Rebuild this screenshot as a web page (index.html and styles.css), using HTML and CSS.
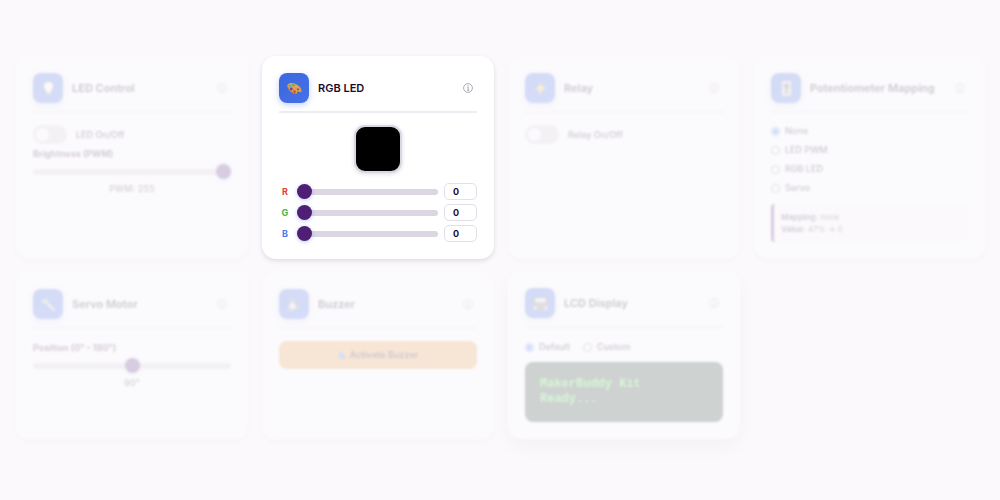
FILE: index.html
```html
<!DOCTYPE html>
<html lang="en">
<head>
    <meta charset="UTF-8">
    <title>MakerBuddy Kit</title>
    <link rel="stylesheet" href="styles.css">
</head>
<body>
<svg class="defs" aria-hidden="true">
    <symbol id="info" viewBox="0 0 10 10">
        <circle cx="5" cy="5" r="4.4" fill="none" stroke="currentColor" stroke-width=".7"/>
        <path d="M4.2 4.3H5.2V7.2M4 7.3H6.3" fill="none" stroke="currentColor" stroke-width=".7"/>
        <circle cx="5" cy="2.800" r=".6" fill="currentColor"/>
    </symbol>
    <symbol id="bell" viewBox="0 0 16 16">
        <path d="M3 2L6 1L9 4L8 7L4 6Z" fill="#85868b"/>
        <path d="M4 6L9 7L14 11L9 12L4 15L1 13Z" fill="#e9e6d6"/>
        <path d="M8 7L11 7L15 12L9 11Z" fill="#77787d"/>
        <path d="M1 12L5 11L6 14L3 15Z" fill="#9a958a"/>
    </symbol>
</svg>
<main class="grid">
    <section class="card dim">
        <header class="head">
            <span class="icon"><svg viewBox="0 0 16 16">
                <path d="M8 1C4 1 2.500 4 3.500 7C4 9 5.500 9.500 5.500 12H10.500C10.500 9.500 12 9 12.500 7C13.500 4 12 1 8 1Z" fill="#fff8dc"/>
                <path d="M6 12H10V14L8 15.500L6 14Z" fill="#a6a6a0"/>
            </svg></span>
            <h2>LED Control</h2>
            <button class="info" aria-label="About LED Control"><svg><use href="#info"/></svg></button>
        </header>
        <label class="toggle"><input type="checkbox">LED On/Off</label>
        <label class="field" for="pwm">Brightness (PWM)</label>
        <input class="slider" id="pwm" type="range" min="0" max="255" value="255">
        <p class="value">PWM: 255</p>
    </section>

    <section class="card">
        <header class="head">
            <span class="icon"><svg viewBox="0 0 16 16">
                <path d="M.5 4C2 1.500 6 1.500 10 3.500C14 5.500 16 9 15.300 11.500C14.500 13 12.500 10.500 11 11.500C10 12.500 11.500 14 9.500 14C5 14-.8 8 .5 4Z" fill="#dba255"/>
                <path d="M.6 6C2 10.500 6 13.700 10 13.700" fill="none" stroke="#9b622c" stroke-width=".8"/>
                <circle cx="3.200" cy="5" r="1.400" fill="#35b8d9"/>
                <circle cx="6.800" cy="4.300" r="1.300" fill="#54b947"/>
                <circle cx="10.300" cy="5.900" r="1.100" fill="#c9b83a"/>
                <circle cx="4.600" cy="8.500" r="1.500" fill="#7d34ae"/>
                <circle cx="8" cy="11.200" r="1.300" fill="#c8433d"/>
                <ellipse cx="11.700" cy="8.800" rx="1.300" ry=".8" fill="#3f4f9c"/>
            </svg></span>
            <h2>RGB LED</h2>
            <button class="info" aria-label="About RGB LED"><svg><use href="#info"/></svg></button>
        </header>
        <div class="swatch"></div>
        <div class="channels">
            <div class="channel">
                <label class="red" for="r">R</label>
                <input class="slider" id="r" type="range" min="0" max="255" value="0">
                <input class="num" type="number" value="0" aria-label="R value">
            </div>
            <div class="channel">
                <label class="green" for="g">G</label>
                <input class="slider" id="g" type="range" min="0" max="255" value="0">
                <input class="num" type="number" value="0" aria-label="G value">
            </div>
            <div class="channel">
                <label class="blue" for="b">B</label>
                <input class="slider" id="b" type="range" min="0" max="255" value="0">
                <input class="num" type="number" value="0" aria-label="B value">
            </div>
        </div>
    </section>

    <section class="card dim">
        <header class="head">
            <span class="icon"><svg viewBox="0 0 16 16">
                <path d="M10 1L2.500 9H7L5.500 15L13.500 6.500H9Z" fill="#ffc83d"/>
            </svg></span>
            <h2>Relay</h2>
            <button class="info" aria-label="About Relay"><svg><use href="#info"/></svg></button>
        </header>
        <label class="toggle"><input type="checkbox">Relay On/Off</label>
    </section>

    <section class="card dim">
        <header class="head">
            <span class="icon"><svg viewBox="0 0 16 16">
                <rect x="3" y="0" width="10" height="16" rx="1.500" fill="#d0d0cc"/>
                <path d="M8 2V14" stroke="#3c3c40" stroke-width="1.600"/>
                <path d="M5 4H6M10 4H11M5 8H6M10 8H11M5 12H6M10 12H11" stroke="#77777a"/>
                <rect x="5" y="4" width="6" height="3" rx="1" fill="#55555a"/>
            </svg></span>
            <h2>Potentiometer Mapping</h2>
            <button class="info" aria-label="About Potentiometer Mapping"><svg><use href="#info"/></svg></button>
        </header>
        <div class="options">
            <label><input type="radio" name="map" checked>None</label>
            <label><input type="radio" name="map">LED PWM</label>
            <label><input type="radio" name="map">RGB LED</label>
            <label><input type="radio" name="map">Servo</label>
        </div>
        <div class="status">
            <p><b>Mapping:</b> none</p>
            <p><b>Value:</b> 47% → 0</p>
        </div>
    </section>

    <section class="card dim">
        <header class="head">
            <span class="icon"><svg viewBox="0 0 16 16">
                <path d="M1 2L4 4L5 1Q8 2 7 5L15 13Q15 15 13 15L5 7Q1 7 1 2Z" fill="#b9bcc0"/>
                <path d="M8 8L14 14" stroke="#e0d3a4" stroke-width="1.500"/>
            </svg></span>
            <h2>Servo Motor</h2>
            <button class="info" aria-label="About Servo Motor"><svg><use href="#info"/></svg></button>
        </header>
        <label class="field" for="servo">Position (0° - 180°)</label>
        <input class="slider" id="servo" type="range" min="0" max="180" value="90">
        <p class="value">90°</p>
    </section>

    <section class="card dim">
        <header class="head">
            <span class="icon"><svg><use href="#bell"/></svg></span>
            <h2>Buzzer</h2>
            <button class="info" aria-label="About Buzzer"><svg><use href="#info"/></svg></button>
        </header>
        <button class="buzz">
            <svg viewBox="0 0 16 16">
                <path d="M3 1L7 1L9 6L15 12L8 14L1 13Z" fill="#2f8fe8"/>
                <path d="M8 8L12 8L15 12L9 11Z" fill="#4f5f80"/>
            </svg>
            Activate Buzzer
        </button>
    </section>

    <section class="card dim raised">
        <header class="head">
            <span class="icon"><svg viewBox="0 0 16 16">
                <rect x="0" y="1" width="16" height="9" rx="2" fill="#65666c"/>
                <rect x="2" y="2" width="12" height="5" rx="2" fill="#d4e0e4"/>
                <path d="M1 8H15L12 12V15H4V12Z" fill="#7b776f"/>
                <path d="M1 10V15H3.500V12ZM15 10V15H12.500V12Z" fill="#e3d9c0"/>
            </svg></span>
            <h2>LCD Display</h2>
            <button class="info" aria-label="About LCD Display"><svg><use href="#info"/></svg></button>
        </header>
        <div class="options row">
            <label><input type="radio" name="lcd" checked>Default</label>
            <label><input type="radio" name="lcd">Custom</label>
        </div>
        <div class="screen">MakerBuddy Kit<br>Ready...</div>
    </section>
</main>
</body>
</html>
```
FILE: styles.css
```css
* {
    margin: 0;
    padding: 0;
    box-sizing: border-box;
}

body {
    background-color: #fbf9fc;
    color: #1a0b2e;
    font-family: Inter, "Liberation Sans", sans-serif;
    font-size: 9px;
    line-height: 12px;
}

input, button {
    font: inherit;
    color: inherit;
}

.defs {
    display: none;
}

.grid {
    display: grid;
    grid-template-columns: repeat(4, minmax(0, 1fr));
    gap: 13px 14px;
    padding: 56px 14px 56px 16px;
}

.card {
    padding: 17px;
    background-color: #fff;
    border-radius: 14px;
    box-shadow: 0 2px 5px rgba(26, 11, 46, .12);
}

.dim {
    opacity: .2;
    filter: blur(1px);
}

.raised {
    transform: translateY(-1px);
    box-shadow: 0 8px 20px rgba(26, 11, 46, .16);
}

.head {
    display: flex;
    align-items: center;
    gap: 9px;
    padding-bottom: 8px;
    margin-bottom: 12px;
    border-bottom: 2px solid #eeebf2;
}

.head h2 {
    flex: 1;
    font-size: 11px;
    line-height: 14px;
    font-weight: 600;
    white-space: nowrap;
}

.icon {
    display: flex;
    align-items: center;
    justify-content: center;
    width: 30px;
    height: 30px;
    border-radius: 8px;
    background: linear-gradient(135deg, #3c66de, #4571e8);
    box-shadow: 0 2px 6px rgba(65, 105, 225, .3);
}

.icon svg {
    width: 15px;
    height: 15px;
}

.info {
    display: flex;
    padding: 4px;
    border: 0;
    background: none;
    color: #8c8794;
}

.info svg {
    width: 10px;
    height: 10px;
}

/* switch */
.toggle {
    display: flex;
    align-items: center;
    gap: 9px;
    font-weight: 500;
}

.toggle input {
    appearance: none;
    width: 34px;
    height: 19px;
    padding: 3px;
    border-radius: 10px;
    background-color: #d9d5dd;
}

.toggle input::before {
    content: "";
    display: block;
    width: 13px;
    height: 13px;
    border-radius: 50%;
    background-color: #fff;
}

.field {
    display: block;
    margin: 3px 0;
    line-height: 14px;
    font-weight: 700;
    color: #3b2348;
}

.value {
    margin-top: 4px;
    text-align: center;
    font-weight: 600;
    color: #5f5568;
}

/* slider */
.slider {
    appearance: none;
    display: block;
    width: 100%;
    min-width: 0;
    height: 15px;
    background: none;
}

.slider::-webkit-slider-runnable-track {
    height: 6px;
    border-radius: 3px;
    background-color: #dcd5e2;
}

.slider::-webkit-slider-thumb {
    appearance: none;
    width: 15px;
    height: 15px;
    margin-top: -5px;
    border-radius: 50%;
    background-color: #4e1f74;
    box-shadow: 0 1px 4px rgba(65, 105, 225, .35);
}

.swatch {
    width: 48px;
    height: 48px;
    margin: 0 auto 10px;
    border: 2px solid #dcd5e2;
    border-radius: 11px;
    background-color: #000;
    box-shadow: 0 1px 4px rgba(26, 11, 46, .15);
}

.channels {
    display: grid;
    gap: 4px;
}

.channel {
    display: grid;
    grid-template-columns: 12px 1fr 33px;
    align-items: center;
    gap: 6px;
    font-weight: 700;
}

.channel label {
    text-align: center;
}

.red {
    color: #e53935;
}

.green {
    color: #43b64a;
}

.blue {
    color: #4777ec;
}

.num {
    appearance: textfield;
    width: 100%;
    height: 17px;
    padding: 0 8px;
    border: 1px solid #e2dfe8;
    border-radius: 5px;
    background-color: #fff;
}

.num::-webkit-inner-spin-button {
    display: none;
}

/* radios */
.options {
    display: grid;
    gap: 7px;
}

.options label {
    display: flex;
    align-items: center;
    gap: 5px;
    font-weight: 500;
}

.options input {
    width: 9px;
    height: 9px;
    accent-color: #2f7bf6;
}

.row {
    display: flex;
    gap: 13px;
    padding-top: 1px;
}

.status {
    margin-top: 10px;
    padding: 7px;
    border-left: 3px solid #4e1f74;
    border-radius: 4px;
    background-color: #fdfcfe;
    font-size: 8px;
    color: #4a3358;
}

.status b {
    font-weight: 700;
}

.buzz {
    display: flex;
    align-items: center;
    justify-content: center;
    gap: 3px;
    width: 100%;
    height: 28px;
    border: 0;
    border-radius: 8px;
    background-color: #ec983e;
    font-weight: 600;
}

.buzz svg {
    width: 9px;
    height: 9px;
}

.screen {
    margin-top: 9px;
    padding: 15px;
    border-radius: 8px;
    background-color: #213a28;
    color: #4cf04c;
    font-family: "Liberation Mono", monospace;
    font-size: 12px;
    line-height: 15px;
    font-weight: 700;
}
```
